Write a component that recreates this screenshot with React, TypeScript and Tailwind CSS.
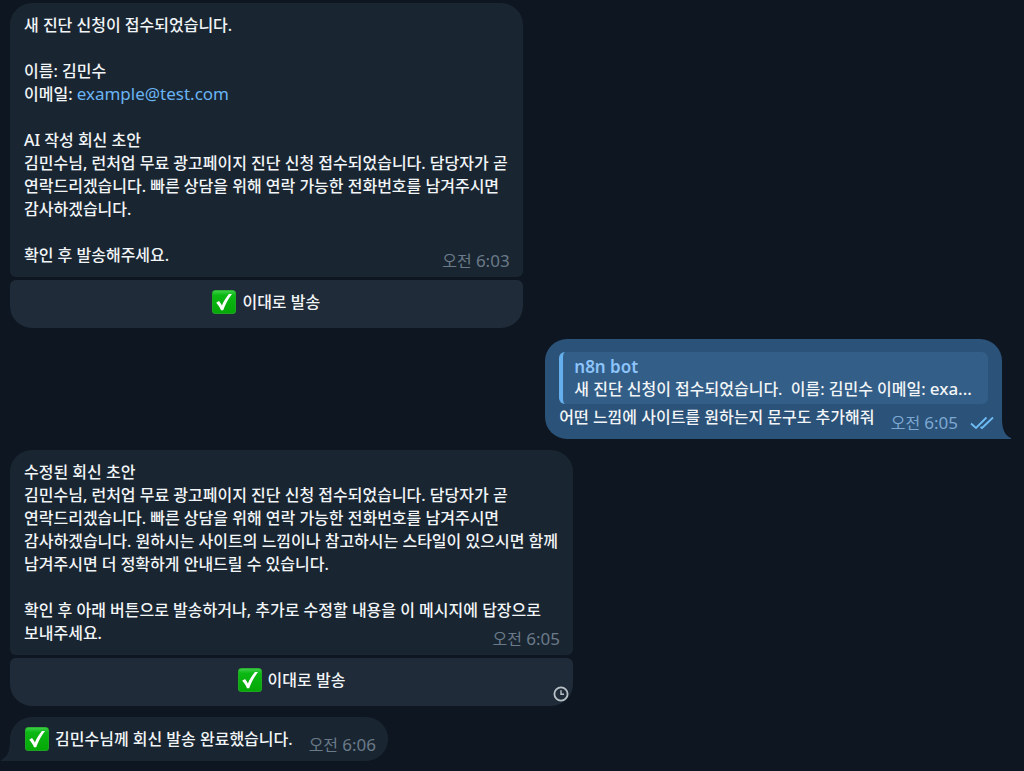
import type { ReactNode } from 'react'

const FIRST_DRAFT = `AI 작성 회신 초안
김민수님, 런처업 무료 광고페이지 진단 신청 접수되었습니다. 담당자가 곧
연락드리겠습니다. 빠른 상담을 위해 연락 가능한 전화번호를 남겨주시면
감사하겠습니다.`

const REVISED_DRAFT = `수정된 회신 초안
김민수님, 런처업 무료 광고페이지 진단 신청 접수되었습니다. 담당자가 곧
연락드리겠습니다. 빠른 상담을 위해 연락 가능한 전화번호를 남겨주시면
감사하겠습니다. 원하시는 사이트의 느낌이나 참고하시는 스타일이 있으시면 함께
남겨주시면 더 정확하게 안내드릴 수 있습니다.`

function CheckEmoji() {
  return (
    <svg viewBox="0 0 24 24" className="size-6 shrink-0" aria-hidden="true">
      <defs>
        <linearGradient id="check-fill" x1="0" y1="0" x2="0" y2="1">
          <stop offset="0" stopColor="#3fd04a" />
          <stop offset="0.2" stopColor="#0cb814" />
          <stop offset="1" stopColor="#04a806" />
        </linearGradient>
      </defs>
      <rect width="24" height="24" rx="3.5" fill="#27a52c" />
      <rect x="0.7" y="0.7" width="22.6" height="22.6" rx="3" fill="url(#check-fill)" />
      <path d="M4.2 12.8 L7 11 C8.3 12.5 9.2 14 9.9 15.5 C11.7 11.2 14 7.4 16.9 4 L20 4 C16.2 9 13.3 14.3 11.2 20.2 L9 20.2 C7.8 17.4 6.3 15 4.2 12.8 Z" fill="#fff" />
    </svg>
  )
}

// Morning timestamps, e.g. 오전 6:03
function Time({ clock, className = 'text-[#6b7a88]' }: { clock: string; className?: string }) {
  return (
    <time className={`shrink-0 leading-5 font-normal ${className}`}>
      오전 <span className="text-[17px] leading-none">{clock}</span>
    </time>
  )
}

function SendButton({ pending = false }: { pending?: boolean }) {
  return (
    <button
      type="button"
      className="relative flex h-12 w-full items-center justify-center gap-1.5 rounded-t-md rounded-b-[22px] bg-[#1f2b38] pb-1"
    >
      <CheckEmoji />
      이대로 발송
      {pending && (
        <svg viewBox="0 0 16 16" className="absolute right-1 bottom-1 size-4" fill="none" stroke="#b9c1c8" strokeWidth="1.8" aria-hidden="true">
          <circle cx="8" cy="8" r="6.6" />
          <path d="M8 4.2 V8.2 H11" strokeWidth="1.4" />
        </svg>
      )}
    </button>
  )
}

type BotMessageProps = {
  lastLine: string
  clock: string
  pending?: boolean
  children: ReactNode
}

function BotMessage({ lastLine, clock, pending, children }: BotMessageProps) {
  return (
    <article className="flex w-fit flex-col gap-[3px]">
      <div className="rounded-t-[22px] rounded-b-md bg-[#192632] pt-[11px] pr-[13px] pb-1.5 pl-3.5">
        <div className="pr-0.5 whitespace-pre-line">{children}</div>
        <div className="flex items-end justify-between">
          <p className="pb-1">{lastLine}</p>
          <Time clock={clock} />
        </div>
      </div>
      <SendButton pending={pending} />
    </article>
  )
}

export default function App() {
  return (
    <main className="flex min-h-screen flex-col items-start gap-[11px] bg-[#0e1621] px-2.5 pt-[3px] font-['Noto_Sans','Noto_Sans_CJK_KR',sans-serif] text-base leading-[23px] font-medium text-[#f2f5f7]">
      <BotMessage lastLine="확인 후 발송해주세요." clock="6:03">
        <p>새 진단 신청이 접수되었습니다.</p>
        <p className="mt-[23px]">이름: 김민수</p>
        <p>
          이메일:{' '}
          <a href="mailto:example@test.com" className="text-[17px] leading-none font-normal text-[#6ab3f3]">
            example@test.com
          </a>
        </p>
        <p className="my-[23px]">{FIRST_DRAFT}</p>
      </BotMessage>

      <article className="relative mr-3 self-end rounded-t-[22px] rounded-bl-[22px] bg-[#2b5278] pt-[13px] pr-2 pb-1 pl-3.5">
        <blockquote className="mr-1.5 rounded-md border-l-4 border-[#65b0ec] bg-[#335e87] py-[3px] pr-4 pl-[11px]">
          <cite className="block text-[17px] font-semibold text-[#8cc4fb] not-italic">n8n bot</cite>
          <p className="whitespace-pre">
            새 진단 신청이 접수되었습니다.  이름: 김민수 이메일: <span className="text-[17px] leading-none">exa...</span>
          </p>
        </blockquote>
        <div className="flex items-end gap-4">
          <p className="pt-0.5 pb-1.5">어떤 느낌에 사이트를 원하는지 문구도 추가해줘</p>
          <div className="ml-auto flex items-center gap-3 pb-0.5">
            <Time clock="6:05" className="text-[#7da8d3]" />
            <svg viewBox="0 0 24 14" className="h-3.5 w-6" fill="none" stroke="#6fbdf5" strokeWidth="1.8" aria-label="읽음">
              <path d="M1 7.5 L6 12 L16.5 1.5 M10.5 11 L12 12 L23 1.5" />
            </svg>
          </div>
        </div>
        <svg viewBox="0 0 9 20" className="absolute bottom-0 left-full h-5 w-[9px]" fill="#2b5278" aria-hidden="true">
          <path d="M0 0 C0 10 3 17 9 19 L9 20 L0 20 Z" />
        </svg>
      </article>

      <BotMessage lastLine="보내주세요." clock="6:05" pending>
        <p>{REVISED_DRAFT}</p>
        <p className="mt-[23px]">확인 후 아래 버튼으로 발송하거나, 추가로 수정할 내용을 이 메시지에 답장으로</p>
      </BotMessage>

      <article className="relative flex items-end gap-4 rounded-t-[22px] rounded-br-[22px] bg-[#192632] pr-3 pb-1.5 pl-[15px]">
        <p className="flex items-center gap-1.5 pt-2.5 pb-1">
          <CheckEmoji />
          김민수님께 회신 발송 완료했습니다.
        </p>
        <Time clock="6:06" />
        <svg viewBox="0 0 9 20" className="absolute right-full bottom-0 h-5 w-[9px]" fill="#192632" aria-hidden="true">
          <path d="M9 0 C9 10 6 17 0 19 L0 20 L9 20 Z" />
        </svg>
      </article>
    </main>
  )
}
